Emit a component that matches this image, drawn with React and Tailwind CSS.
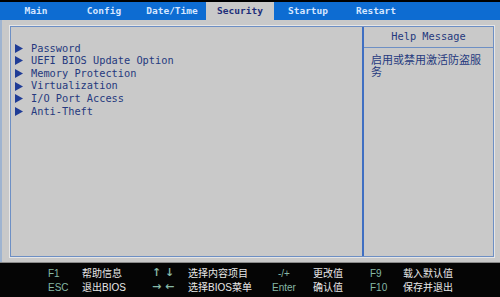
const TABS = ['Main', 'Config', 'Date/Time', 'Security', 'Startup', 'Restart'];
const ITEMS = ['Password', 'UEFI BIOS Update Option', 'Memory Protection', 'Virtualization', 'I/O Port Access', 'Anti-Theft'];

const MONO = { fontFamily: "'DejaVu Sans Mono', 'Noto Sans CJK SC', monospace" };
const CJK = { fontFamily: "'Liberation Sans', 'Noto Sans CJK SC', sans-serif" };
const ARROWS = { fontFamily: "'DejaVu Sans', sans-serif" };

function Arrow() {
  return (
    <svg width="8" height="9" viewBox="0 0 8 9" className="shrink-0">
      <polygon points="0,0 8,4.5 0,9" fill="#1f3c96" />
    </svg>
  );
}

function FooterRow({ k1, d1, k2, d2, k3, d3, k4, d4 }) {
  return (
    <div className="flex items-center h-[14px] pl-[48px] text-[10px]">
      <span className="w-[34px] text-[#86b8a6]">{k1}</span>
      <span className="w-[70px] text-[#e8e8e8]">{d1}</span>
      <span className="w-[36px] text-[11px] font-bold text-[#86b8a6]" style={ARROWS}>{k2}</span>
      <span className="w-[74px] text-[#e8e8e8]">{d2}</span>
      <span className="w-[44px] text-center text-[#86b8a6]">{k3}</span>
      <span className="w-[64px] pl-[7px] text-[#e8e8e8]">{d3}</span>
      <span className="w-[33px] text-[#86b8a6]">{k4}</span>
      <span className="text-[#e8e8e8]">{d4}</span>
    </div>
  );
}

export default function App() {
  return (
    <div className="w-[500px] h-[297px] flex flex-col bg-[#c9c9c9] overflow-hidden">
      {/* Tab bar */}
      <div className="h-[20px] flex bg-[#0d6cd2] border-t-2 border-black pl-[2px]" style={MONO}>
        {TABS.map((t) => (
          <div
            key={t}
            className={[
              'w-[68px] flex items-center justify-center text-[9.5px] font-bold',
              t === 'Security' ? 'bg-[#c9c9c9] text-[#1e2f7a]' : 'text-[#d6e6ff]',
            ].join(' ')}
          >
            {t}
          </div>
        ))}
      </div>

      {/* Body */}
      <div className="h-[242px] flex flex-col pt-[6px] pl-[8px] pr-[6px] pb-[5px] border-l-2 border-[#9fb4d0]">
        <div className="flex-1 flex border border-[#6d8fc4] shadow-[0_0_0_1px_#e6e6e6]">
          <div className="flex-1 pt-[15px] pl-[4px] text-[10.3px] text-[#25397e]" style={MONO}>
            {ITEMS.map((it) => (
              <div key={it} className="flex items-center gap-[8px] h-[12.6px]">
                <Arrow />
                <span>{it}</span>
              </div>
            ))}
          </div>
          <div className="w-[131px] flex flex-col border-l-2 border-[#3f6fc2]">
            <div
              className="h-[21px] flex items-center justify-center text-[10.3px] text-[#25397e] border-b border-[#6d8fc4]"
              style={MONO}
            >
              Help Message
            </div>
            <div className="pt-[6px] pl-[7px] pr-[5px] text-[11px] leading-[12px] text-[#25397e]" style={CJK}>
              启用或禁用激活防盗服务
            </div>
          </div>
        </div>
      </div>

      {/* Footer */}
      <div className="flex-1 bg-[#050505] flex flex-col justify-center border-t border-[#8a8a8a]" style={CJK}>
        <FooterRow k1="F1" d1="帮助信息" k2="↑ ↓" d2="选择内容项目" k3="-/+" d3="更改值" k4="F9" d4="载入默认值" />
        <FooterRow k1="ESC" d1="退出BIOS" k2="→ ←" d2="选择BIOS菜单" k3="Enter" d3="确认值" k4="F10" d4="保存并退出" />
      </div>
    </div>
  );
}
